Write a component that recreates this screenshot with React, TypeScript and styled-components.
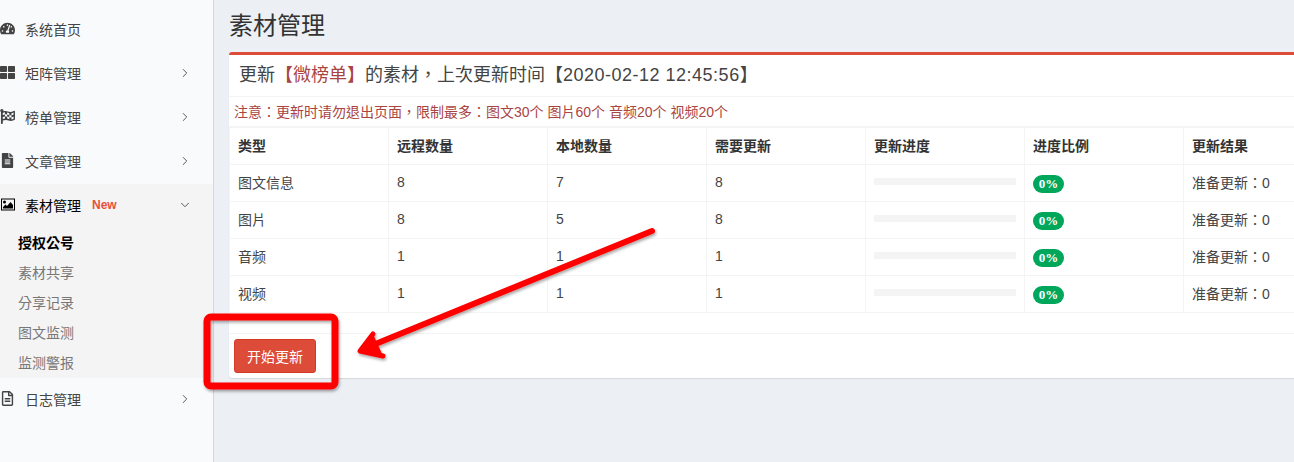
import React from "react";
import styled, { createGlobalStyle } from "styled-components";
import { ChevronRight, ChevronDown } from "lucide-react";
import { FaTachometerAlt, FaThLarge, FaFlagCheckered, FaFileAlt, FaRegFileAlt } from "react-icons/fa";

const Global = createGlobalStyle`
  html, body { margin: 0; padding: 0; height: 462px; overflow: hidden; background: #ecf0f5; }
  body { font-family: "Liberation Sans", "Noto Sans CJK TC", sans-serif; font-size: 14px; color: #333; }
  * { box-sizing: border-box; }
`;

const Page = styled.div`
  position: relative;
  display: flex;
  width: 1294px;
  height: 462px;
  overflow: hidden;
`;

const Sidebar = styled.aside`
  flex: 0 0 214px;
  height: 462px;
  padding-top: 8px;
  background: #f9fafc;
  border-right: 1px solid #d2d6de;
`;

const NavItem = styled.div<{ $open?: boolean }>`
  display: flex;
  align-items: center;
  height: 44px;
  padding: 0 20px 3px 0;
  font-size: 14px;
  color: ${(p) => (p.$open ? "#000" : "#444")};
  background: ${(p) => (p.$open ? "#f4f4f5" : "transparent")};
  svg.nav-icon {
    flex: 0 0 15px;
    width: 15px;
    height: 15px;
    margin-right: 10px;
  }
`;

const NavLabel = styled.span`
  flex: 0 0 auto;
`;

const NewTag = styled.span`
  margin-left: 11px;
  font-size: 12px;
  font-weight: 700;
  color: #e8503a;
`;

const Chevron = styled.span`
  margin-left: auto;
  display: flex;
  width: 14px;
  margin-right: 1px;
  color: #444;
`;

const SubMenu = styled.div`
  background: #f4f4f5;
`;

const SubItem = styled.div<{ $active?: boolean }>`
  height: 30px;
  line-height: 30px;
  padding-left: 18px;
  font-size: 14px;
  color: ${(p) => (p.$active ? "#000" : "#777")};
  font-weight: ${(p) => (p.$active ? 700 : 400)};
`;

const Main = styled.main`
  flex: 0 0 auto;
  width: 1200px;
  padding: 0 0 0 15px;
`;

const Title = styled.h1`
  margin: 0;
  height: 52px;
  padding-top: 11px;
  font-size: 24px;
  line-height: 30px;
  font-weight: 400;
  color: #333;
`;

const Box = styled.section`
  width: 1113px;
  height: 326px;
  background: #fff;
  border-top: 3px solid #dd4b39;
  border-radius: 3px;
  box-shadow: 0 1px 1px rgba(0, 0, 0, 0.1);
`;

const BoxHeader = styled.div`
  display: flex;
  align-items: center;
  height: 42px;
  padding: 0 0 5px 10px;
  font-size: 18px;
  color: #444;
  border-bottom: 1px solid #f4f4f4;
`;

const Brand = styled.span`
  color: #a94442;
`;

const Stamp = styled.span`
  letter-spacing: 0.5px;
`;

const Notice = styled.div`
  display: flex;
  align-items: center;
  height: 30px;
  padding: 0 0 2px 5px;
  font-size: 14px;
  color: #a94442;
  border-bottom: 1px solid #f4f4f4;
`;

const Grid = styled.table`
  border-collapse: collapse;
  table-layout: fixed;
  width: 1113px;
  font-size: 14px;
`;

const Cell = styled.td`
  width: 159px;
  height: 37px;
  padding: 0 8px 2px;
  border: 1px solid #f4f4f4;
  color: #444;
  vertical-align: middle;
`;

const Head = styled(Cell).attrs({ as: "th" })`
  text-align: left;
  color: #333;
  font-weight: 700;
`;

const Track = styled.div`
  height: 7px;
  margin-top: -1px;
  background: #f4f4f4;
`;

const Pill = styled.span`
  display: inline-block;
  width: 31px;
  height: 18px;
  line-height: 18px;
  margin-top: 4px;
  border-radius: 9px;
  text-align: center;
  background: #00a65a;
  color: #fff;
  font-family: "Liberation Serif", serif;
  font-size: 13px;
  font-weight: 700;
`;

const Footer = styled.div`
  margin-top: 20px;
  padding: 5px;
  border-top: 1px solid #f4f4f4;
`;

const StartButton = styled.button`
  display: block;
  width: 82px;
  height: 34px;
  padding: 0;
  border: 1px solid #d73925;
  border-radius: 3px;
  background: #dd4b39;
  color: #fff;
  font-family: inherit;
  font-size: 14px;
`;

const Annotation = styled.svg`
  position: absolute;
  left: 0;
  top: 0;
  width: 1294px;
  height: 462px;
  pointer-events: none;
`;

const rows = [
  ["图文信息", "8", "7", "8"],
  ["图片", "8", "5", "8"],
  ["音频", "1", "1", "1"],
  ["视频", "1", "1", "1"],
];

const PictureIcon = ({ className }: { className?: string }) => (
  <svg className={className} viewBox="0 0 15 15" aria-hidden="true" fill="currentColor">
    <path
      fillRule="evenodd"
      d="M1 1.500h14v12H1zm1 1v10h12v-10zM3 11.500v-1.500l2.500-2.500 1.500 1.500 3.500-4 2.500 3v3.500zM4.500 3.500a1.500 1.500 0 1 1 0 3 1.500 1.500 0 0 1 0-3z"
    />
  </svg>
);

const Nav = ({ icon: I, label, chevron = true }: { icon: React.ComponentType<{ className?: string }>; label: string; chevron?: boolean }) => (
  <NavItem>
    <I className="nav-icon" />
    <NavLabel>{label}</NavLabel>
    {chevron && (
      <Chevron>
        <ChevronRight size={14} strokeWidth={1.5} />
      </Chevron>
    )}
  </NavItem>
);

export default function App() {
  return (
    <Page>
      <Global />
      <Sidebar>
        <Nav icon={FaTachometerAlt} label="系统首页" chevron={false} />
        <Nav icon={FaThLarge} label="矩阵管理" />
        <Nav icon={FaFlagCheckered} label="榜单管理" />
        <Nav icon={FaFileAlt} label="文章管理" />
        <NavItem $open>
          <PictureIcon className="nav-icon" />
          <NavLabel>素材管理</NavLabel>
          <NewTag>New</NewTag>
          <Chevron>
            <ChevronDown size={14} strokeWidth={1.5} />
          </Chevron>
        </NavItem>
        <SubMenu>
          <SubItem $active>授权公号</SubItem>
          <SubItem>素材共享</SubItem>
          <SubItem>分享记录</SubItem>
          <SubItem>图文监测</SubItem>
          <SubItem>监测警报</SubItem>
        </SubMenu>
        <Nav icon={FaRegFileAlt} label="日志管理" />
      </Sidebar>
      <Main>
        <Title>素材管理</Title>
        <Box>
          <BoxHeader>
            <span>
              更新<Brand>【微榜单】</Brand>的素材，上次更新时间【<Stamp>2020-02-12 12:45:56</Stamp>】
            </span>
          </BoxHeader>
          <Notice>注意：更新时请勿退出页面，限制最多：图文30个 图片60个 音频20个 视频20个</Notice>
          <Grid>
            <thead>
              <tr>
                {["类型", "远程数量", "本地数量", "需要更新", "更新进度", "进度比例", "更新结果"].map((h) => (
                  <Head key={h}>{h}</Head>
                ))}
              </tr>
            </thead>
            <tbody>
              {rows.map((r) => (
                <tr key={r[0]}>
                  {r.map((c, i) => (
                    <Cell key={i}>{c}</Cell>
                  ))}
                  <Cell>
                    <Track />
                  </Cell>
                  <Cell>
                    <Pill>0%</Pill>
                  </Cell>
                  <Cell>准备更新：0</Cell>
                </tr>
              ))}
            </tbody>
          </Grid>
          <Footer>
            <StartButton>开始更新</StartButton>
          </Footer>
        </Box>
      </Main>
      <Annotation viewBox="0 0 1294 462" aria-hidden="true">
        <defs>
          <filter id="sh" x="-10%" y="-10%" width="120%" height="120%">
            <feDropShadow dx="1" dy="2" stdDeviation="1.5" floodColor="#000" floodOpacity="0.35" />
          </filter>
        </defs>
        <g filter="url(#sh)">
          <rect x="207" y="317" width="128" height="69" rx="4" fill="none" stroke="#f00" strokeWidth="7" />
          <path d="M652 231L368 347" fill="none" stroke="#f00" strokeWidth="6" strokeLinecap="round" />
          <path d="M373 334L360 351L383 356" fill="none" stroke="#f00" strokeWidth="5" strokeLinecap="round" strokeLinejoin="round" />
          <path d="M373 334L360 351L383 356Z" fill="#f00" />
        </g>
      </Annotation>
    </Page>
  );
}
